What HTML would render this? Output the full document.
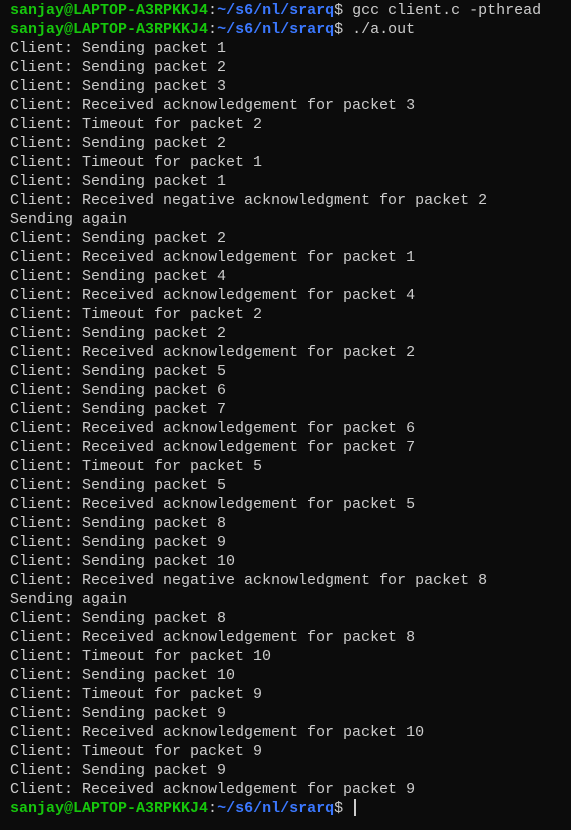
<!DOCTYPE html><html><head><style>
body{margin:0;background:#0c0c0c;width:571px;height:830px;overflow:hidden}
pre{margin:0;padding:1px 0 0 10px;font-family:"Liberation Mono",monospace;font-size:15px;line-height:19px;color:#cccccc}
.g{color:#16c60c;font-weight:bold}.b{color:#3b78ff;font-weight:bold}
.c{display:inline-block;width:2px;height:17px;background:#ccc;vertical-align:-4px;margin-left:2px}
</style></head><body><pre><span class="g">sanjay@LAPTOP-A3RPKKJ4</span>:<span class="b">~/s6/nl/srarq</span>$ gcc client.c -pthread
<span class="g">sanjay@LAPTOP-A3RPKKJ4</span>:<span class="b">~/s6/nl/srarq</span>$ ./a.out
Client: Sending packet 1
Client: Sending packet 2
Client: Sending packet 3
Client: Received acknowledgement for packet 3
Client: Timeout for packet 2
Client: Sending packet 2
Client: Timeout for packet 1
Client: Sending packet 1
Client: Received negative acknowledgment for packet 2
Sending again
Client: Sending packet 2
Client: Received acknowledgement for packet 1
Client: Sending packet 4
Client: Received acknowledgement for packet 4
Client: Timeout for packet 2
Client: Sending packet 2
Client: Received acknowledgement for packet 2
Client: Sending packet 5
Client: Sending packet 6
Client: Sending packet 7
Client: Received acknowledgement for packet 6
Client: Received acknowledgement for packet 7
Client: Timeout for packet 5
Client: Sending packet 5
Client: Received acknowledgement for packet 5
Client: Sending packet 8
Client: Sending packet 9
Client: Sending packet 10
Client: Received negative acknowledgment for packet 8
Sending again
Client: Sending packet 8
Client: Received acknowledgement for packet 8
Client: Timeout for packet 10
Client: Sending packet 10
Client: Timeout for packet 9
Client: Sending packet 9
Client: Received acknowledgement for packet 10
Client: Timeout for packet 9
Client: Sending packet 9
Client: Received acknowledgement for packet 9
<span class="g">sanjay@LAPTOP-A3RPKKJ4</span>:<span class="b">~/s6/nl/srarq</span>$ <span class="c"></span></pre></body></html>
